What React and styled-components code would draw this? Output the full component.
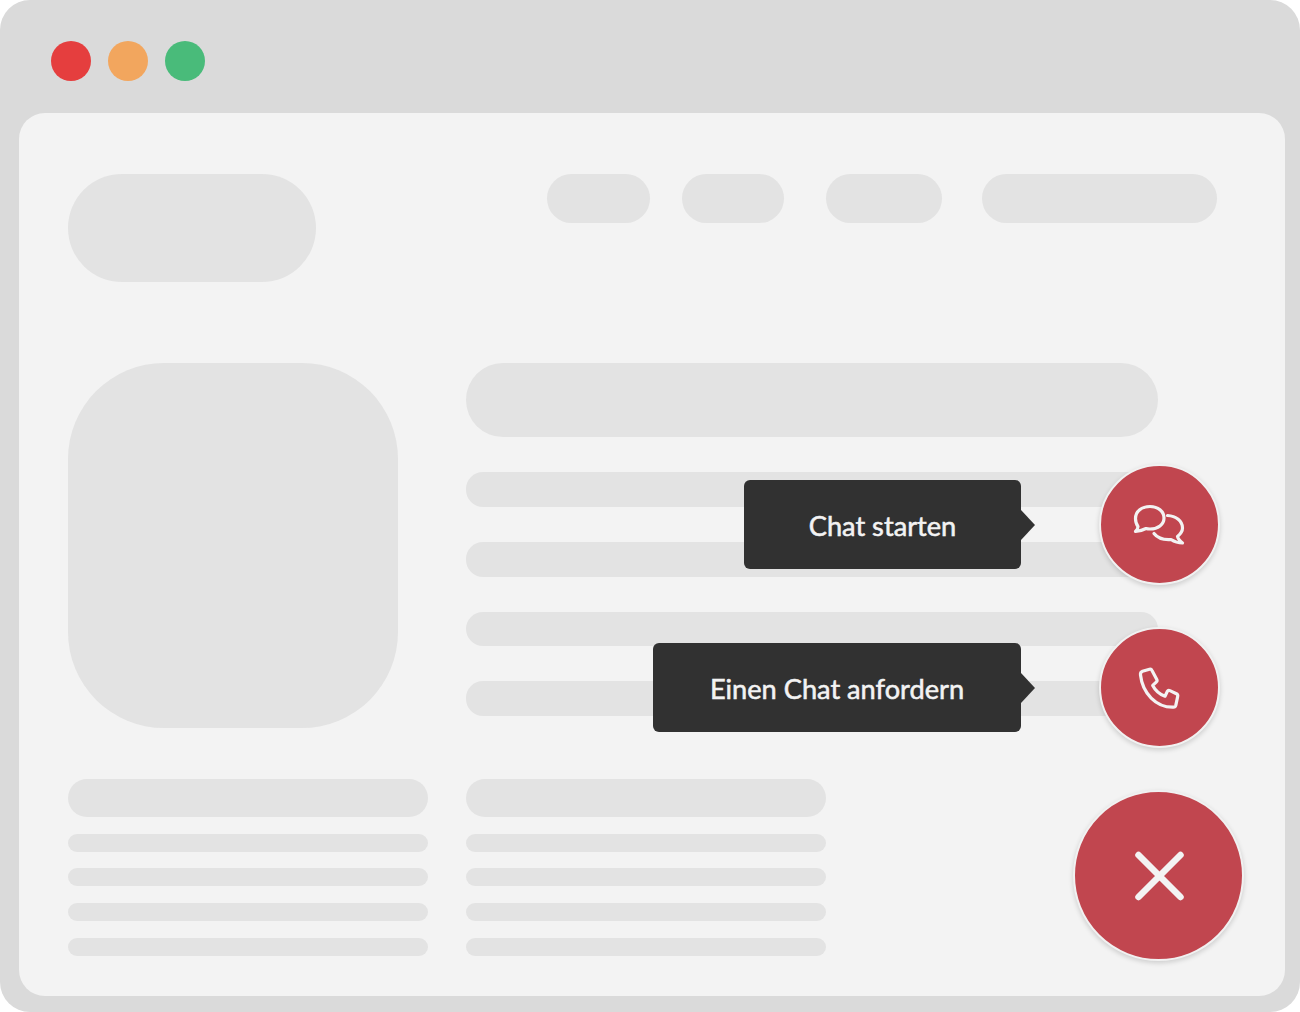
import styled, { createGlobalStyle } from "styled-components";

const GlobalStyle = createGlobalStyle`
  html, body {
    margin: 0;
    padding: 0;
    background: #fff;
  }
`;

const Window = styled.div`
  box-sizing: border-box;
  width: 1300px;
  height: 1012px;
  padding: 0 15px 16px 19px;
  display: flex;
  flex-direction: column;
  background: #dadada;
  border-radius: 30px;
  overflow: hidden;
`;

const TitleBar = styled.div`
  flex: 0 0 113px;
  box-sizing: border-box;
  padding: 41px 0 0 32px;
  display: flex;
  gap: 17px;
`;

const Dot = styled.span`
  width: 40px;
  height: 40px;
  border-radius: 50%;
  background: ${(p) => p.$color};
`;

const Panel = styled.div`
  position: relative;
  flex: 1;
  box-sizing: border-box;
  padding: 61px 68px 0 49px;
  background: #f3f3f3;
  border-radius: 26px;
`;

const Header = styled.div`
  display: flex;
  justify-content: space-between;
  align-items: flex-start;
`;

const Logo = styled.div`
  width: 248px;
  height: 108px;
  border-radius: 54px;
  background: #e3e3e3;
`;

const Nav = styled.div`
  display: flex;
`;

const NavPill = styled.div`
  width: ${(p) => p.$width}px;
  height: 49px;
  margin-left: ${(p) => p.$gap || 0}px;
  border-radius: 25px;
  background: #e3e3e3;
`;

const Main = styled.div`
  display: flex;
  gap: 68px;
  margin-top: 81px;
`;

const Picture = styled.div`
  flex: 0 0 330px;
  height: 365px;
  border-radius: 96px;
  background: #e3e3e3;
`;

const Copy = styled.div`
  width: 692px;
  display: flex;
  flex-direction: column;
  gap: 35px;
`;

const Headline = styled.div`
  height: 74px;
  border-radius: 37px;
  background: #e3e3e3;
`;

const CopyLine = styled.div`
  height: 34.8px;
  border-radius: 17px;
  background: #e3e3e3;
`;

const Footer = styled.div`
  display: flex;
  gap: 38px;
  margin-top: 51px;
`;

const FooterCol = styled.div`
  width: 360px;
  display: flex;
  flex-direction: column;
  gap: 16.7px;
`;

const FooterHead = styled.div`
  height: 38px;
  border-radius: 19px;
  background: #e3e3e3;
`;

const FooterLine = styled.div`
  height: 18px;
  border-radius: 9px;
  background: #e3e3e3;
`;

const FabStack = styled.div`
  position: absolute;
  right: 41px;
  bottom: 35px;
  display: flex;
  flex-direction: column;
  align-items: flex-end;
  gap: 42px;
`;

const FabRow = styled.div`
  display: flex;
  align-items: center;
  gap: 77.5px;
  margin-right: 24.5px;
`;

const Tooltip = styled.div`
  position: relative;
  box-sizing: border-box;
  width: ${(p) => p.$width}px;
  height: 89px;
  padding-top: 1px;
  display: flex;
  align-items: center;
  justify-content: center;
  background: #313131;
  border-radius: 6px;
  color: #f3f3f3;
  font-family: Lato, "Open Sans", sans-serif;
  font-size: 27.2px;
  font-weight: 400;
  -webkit-text-stroke: 0.55px #f3f3f3;
  white-space: nowrap;

  &::after {
    content: "";
    position: absolute;
    left: 100%;
    top: 50%;
    margin-top: -15px;
    border-left: 14px solid #313131;
    border-top: 15px solid transparent;
    border-bottom: 15px solid transparent;
  }
`;

const Fab = styled.div`
  box-sizing: border-box;
  width: ${(p) => p.$size}px;
  height: ${(p) => p.$size}px;
  display: flex;
  align-items: center;
  justify-content: center;
  background: #c1464f;
  border: 2px solid #f1f1f1;
  border-radius: 50%;
  box-shadow: 0 2px 5px rgba(0, 0, 0, 0.16);
`;

const Glyph = styled.svg`
  fill: none;
  stroke: #f3f3f3;
  stroke-width: ${(p) => p.$stroke};
  stroke-linecap: round;
  stroke-linejoin: round;
`;

const ChatIcon = () => (
  <Glyph $stroke={3.2} width="60" height="50" viewBox="-1 0 60 50">
    <path d="M8 26.5C6 24 5.5 21 5.5 18.5C5.5 11 12 6.5 20 6.5C28 6.5 34 11.5 34 18C34 24.5 28 29 20 29C18.5 29 17.5 29 16 28.5C12 30.5 9 31 5.5 31.5C7 30 8 28.5 8 26.5Z" />
    <path d="M37.5 15.5C46 16 52.5 21 52.5 28C52.5 31 50.5 34 47.5 36.5C48 39 50 41 52.5 43C48 43 44 41.5 41 39.5C34 40 27.5 38 24 33.5" />
  </Glyph>
);

const PhoneIcon = () => (
  <Glyph $stroke={3.2} width="60" height="54" viewBox="-1 0 60 54">
    <path d="M10.5 14C10.2 12 11 10.8 12.5 10.2L19.5 8.2C20.6 7.9 21.5 8.4 22 9.4L26.8 18.4C27.3 19.4 27 20.4 26.2 21.1L22.7 24.4C25.3 29.4 30 33.3 35 35.2L37.2 30.6C37.8 29.5 38.8 29.1 39.9 29.6L46.4 32.7C47.5 33.3 48 34.2 47.7 35.4L45.8 44.4C45.5 45.5 44.7 46.2 43.5 46.2C26 46.7 12.5 32 10.5 14Z" />
  </Glyph>
);

const CloseIcon = () => (
  <Glyph $stroke={6.5} width="54" height="54" viewBox="-0.5 0 54 54">
    <path d="M6 6L48 48M48 6L6 48" />
  </Glyph>
);

export default function App() {
  const copyLines = [0, 1, 2, 3];
  const footerCols = [0, 1];

  return (
    <Window>
      <GlobalStyle />
      <TitleBar>
        <Dot $color="#e53e3e" />
        <Dot $color="#f2a65e" />
        <Dot $color="#49bb7a" />
      </TitleBar>
      <Panel>
        <Header>
          <Logo />
          <Nav>
            <NavPill $width={103} />
            <NavPill $width={102} $gap={32} />
            <NavPill $width={116} $gap={42} />
            <NavPill $width={235} $gap={40} />
          </Nav>
        </Header>
        <Main>
          <Picture />
          <Copy>
            <Headline />
            {copyLines.map((i) => (
              <CopyLine key={i} />
            ))}
          </Copy>
        </Main>
        <Footer>
          {footerCols.map((col) => (
            <FooterCol key={col}>
              <FooterHead />
              {copyLines.map((i) => (
                <FooterLine key={i} />
              ))}
            </FooterCol>
          ))}
        </Footer>
        <FabStack>
          <FabRow>
            <Tooltip $width={277}>Chat starten</Tooltip>
            <Fab $size={121}>
              <ChatIcon />
            </Fab>
          </FabRow>
          <FabRow>
            <Tooltip $width={368}>Einen Chat anfordern</Tooltip>
            <Fab $size={121}>
              <PhoneIcon />
            </Fab>
          </FabRow>
          <Fab $size={171}>
            <CloseIcon />
          </Fab>
        </FabStack>
      </Panel>
    </Window>
  );
}
